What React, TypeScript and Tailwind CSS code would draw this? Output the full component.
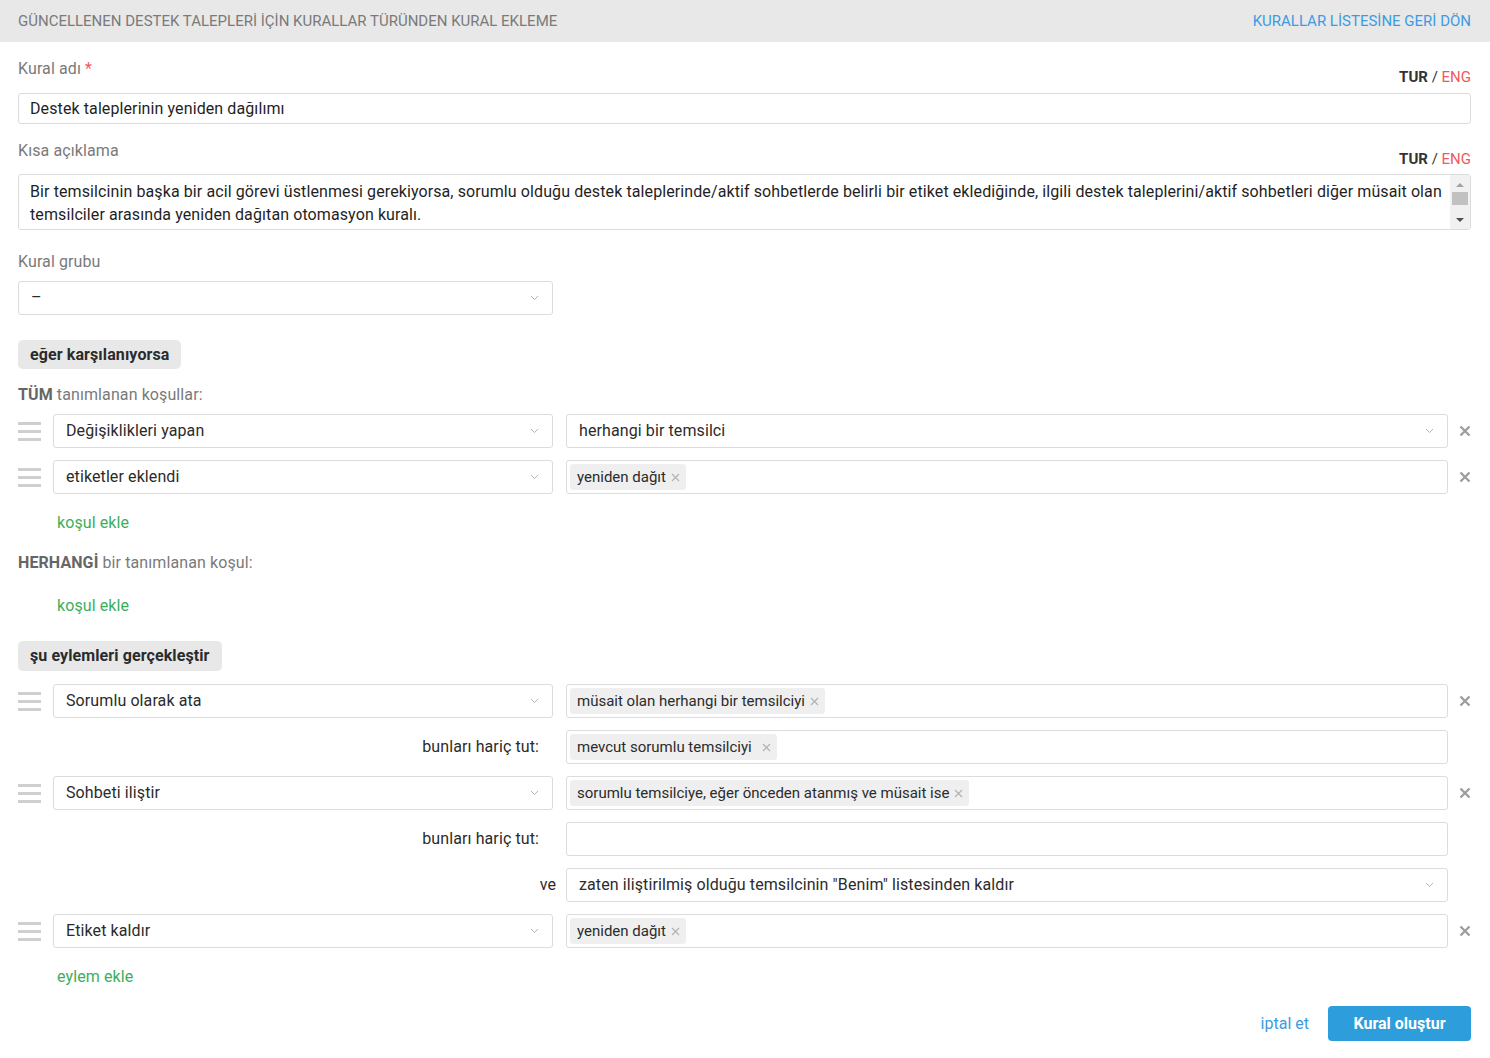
import React from 'react'

const Chevron = () => (
  <svg width="9" height="6" viewBox="0 0 9 6" className="shrink-0">
    <path d="M1 1l3.5 3.5L8 1" fill="none" stroke="#b5b5b5" strokeWidth="1" />
  </svg>
)

const Handle = () => (
  <div className="w-[35px] shrink-0 flex flex-col gap-[5px] pt-[1px]">
    <div className="w-[23px] h-[3px] bg-[#cfcfcf]" />
    <div className="w-[23px] h-[3px] bg-[#cfcfcf]" />
    <div className="w-[23px] h-[3px] bg-[#cfcfcf]" />
  </div>
)

const RemoveX = () => (
  <div className="w-[23px] shrink-0 flex justify-end">
    <svg width="12" height="12" viewBox="0 0 12 12">
      <path d="M1.5 1.5l9 9M10.5 1.5l-9 9" stroke="#9e9e9e" strokeWidth="2.4" />
    </svg>
  </div>
)

function Select({ value, className = '' }: { value: string; className?: string }) {
  return (
    <div className={`h-[34px] border border-[#dcdcdc] rounded-[3px] bg-white flex items-center pl-[12px] pr-[13px] ${className}`}>
      <span className="flex-1 text-[16px] tracking-[0.1px] text-[#2b2b2b] truncate">{value}</span>
      <Chevron />
    </div>
  )
}

function Chip({ label, gap = false }: { label: string; gap?: boolean }) {
  return (
    <span className="h-[26px] bg-[#efefef] rounded-[3px] flex items-center pl-[7px] pr-[6px] text-[15px] text-[#2b2b2b]">
      {label}
      <svg width="9" height="9" viewBox="0 0 9 9" className={gap ? 'ml-[10px]' : 'ml-[5px]'}>
        <path d="M1 1l7 7M8 1l-7 7" stroke="#b3b3b3" strokeWidth="1.2" />
      </svg>
    </span>
  )
}

function ChipBox({ chips }: { chips: { label: string; gap?: boolean }[] }) {
  return (
    <div className="flex-1 h-[34px] border border-[#dcdcdc] rounded-[3px] bg-white flex items-center pl-[3px] gap-1">
      {chips.map(c => <Chip key={c.label} label={c.label} gap={c.gap} />)}
    </div>
  )
}

function Row({ left, right, remove = true }: { left: React.ReactNode; right: React.ReactNode; remove?: boolean }) {
  return (
    <div className="flex items-center">
      {left}
      <div className="w-[13px] shrink-0" />
      {right}
      {remove ? <RemoveX /> : <div className="w-[23px] shrink-0" />}
    </div>
  )
}

const SubLabel = ({ text, pr = 'pr-[14px]' }: { text: string; pr?: string }) => (
  <div className={`w-[535px] shrink-0 text-right text-[16px] tracking-[0.1px] text-[#2b2b2b] ${pr}`}>{text}</div>
)

const LangSwitch = () => (
  <span className="text-[15px]">
    <b className="text-[#333] font-bold">TUR</b>
    <span className="text-[#333]"> / </span>
    <span className="text-[#f0595f]">ENG</span>
  </span>
)

const AddLink = ({ text }: { text: string }) => (
  <div className="pl-[39px] text-[16px] tracking-[0.1px] text-[#3cae5c]">{text}</div>
)

export default function App() {
  return (
    <div className="w-[1490px] min-h-[1058px] bg-white" style={{ fontFamily: 'Roboto, "Noto Sans", sans-serif' }}>
      {/* header */}
      <div className="h-[42px] bg-[#e8e8e8] flex items-center justify-between pr-[19px] pl-[18px]">
        <span className="text-[15px] text-[#7a7a7a]">GÜNCELLENEN DESTEK TALEPLERİ İÇİN KURALLAR TÜRÜNDEN KURAL EKLEME</span>
        <span className="text-[15px] text-[#3d9be0]">KURALLAR LİSTESİNE GERİ DÖN</span>
      </div>

      <div className="pl-[18px] pr-[19px]">
        {/* Kural adı */}
        <div className="pt-[16px] flex items-end justify-between">
          <span className="text-[16px] tracking-[0.1px] text-[#7a7a7a] leading-[22px] mb-[13px]">Kural adı <span className="text-[#f0595f]">*</span></span>
          <span className="mb-[4px]"><LangSwitch /></span>
        </div>
        <div className="h-[31px] border border-[#dcdcdc] rounded-[3px] flex items-center pl-[11px] text-[16px] tracking-[0.1px] text-[#1f1f1f]">
          Destek taleplerinin yeniden dağılımı
        </div>

        {/* Kısa açıklama */}
        <div className="pt-[16px] flex items-end justify-between">
          <span className="text-[16px] tracking-[0.1px] text-[#7a7a7a] leading-[22px] mb-[12px]">Kısa açıklama</span>
          <span className="mb-[3px]"><LangSwitch /></span>
        </div>
        <div className="h-[56px] border border-[#dcdcdc] rounded-[3px] flex">
          <div className="flex-1 pl-[11px] pr-[8px] pt-[5px] text-[16px] tracking-[0.1px] leading-[23px] text-[#1f1f1f]">
            Bir temsilcinin başka bir acil görevi üstlenmesi gerekiyorsa, sorumlu olduğu destek taleplerinde/aktif sohbetlerde belirli bir etiket eklediğinde, ilgili destek taleplerini/aktif sohbetleri diğer müsait olan temsilciler arasında yeniden dağıtan otomasyon kuralı.
          </div>
          <div className="w-[20px] bg-[#f1f1f1] flex flex-col items-center">
            <svg width="10" height="16" viewBox="0 0 10 16"><path d="M1 12l4-4 4 4z" fill="#a3a3a3" /></svg>
            <div className="w-[16px] h-[13px] bg-[#c1c1c1] mt-[1px]" />
            <div className="flex-1" />
            <svg width="10" height="14" viewBox="0 0 10 14"><path d="M1 3l4 4 4-4z" fill="#505050" /></svg>
          </div>
        </div>

        {/* Kural grubu */}
        <div className="pt-[21px] text-[16px] tracking-[0.1px] text-[#7a7a7a] leading-[22px]">Kural grubu</div>
        <div className="mt-[8px] w-[535px]">
          <Select value="–" />
        </div>

        {/* conditions */}
        <div className="mt-[25px] inline-flex h-[29px] items-center px-[12px] rounded-[5px] bg-[#e8e8e8] text-[16px] tracking-[0.1px] font-bold text-[#2b2b2b]">eğer karşılanıyorsa</div>
        <div className="mt-[15px] text-[16px] tracking-[0.1px] text-[#7a7a7a] leading-[22px]"><b className="font-bold text-[#666]">TÜM</b> tanımlanan koşullar:</div>

        <div className="mt-[8px] flex flex-col gap-[12px]">
          <Row left={<><Handle /><Select value="Değişiklikleri yapan" className="w-[500px] shrink-0" /></>} right={<Select value="herhangi bir temsilci" className="flex-1" />} />
          <Row left={<><Handle /><Select value="etiketler eklendi" className="w-[500px] shrink-0" /></>} right={<ChipBox chips={[{ label: 'yeniden dağıt' }]} />} />
        </div>

        <div className="mt-[17px]"><AddLink text="koşul ekle" /></div>
        <div className="mt-[17px] text-[16px] tracking-[0.1px] text-[#7a7a7a] leading-[22px]"><b className="font-bold text-[#666]">HERHANGİ</b> bir tanımlanan koşul:</div>
        <div className="mt-[20px]"><AddLink text="koşul ekle" /></div>

        {/* actions */}
        <div className="mt-[23px] inline-flex h-[30px] items-center px-[12px] rounded-[5px] bg-[#e8e8e8] text-[16px] tracking-[0.1px] font-bold text-[#2b2b2b]">şu eylemleri gerçekleştir</div>

        <div className="mt-[13px] flex flex-col gap-[12px]">
          <Row left={<><Handle /><Select value="Sorumlu olarak ata" className="w-[500px] shrink-0" /></>} right={<ChipBox chips={[{ label: 'müsait olan herhangi bir temsilciyi' }]} />} />
          <Row remove={false} left={<SubLabel text="bunları hariç tut:" />} right={<ChipBox chips={[{ label: 'mevcut sorumlu temsilciyi', gap: true }]} />} />
          <Row left={<><Handle /><Select value="Sohbeti iliştir" className="w-[500px] shrink-0" /></>} right={<ChipBox chips={[{ label: 'sorumlu temsilciye, eğer önceden atanmış ve müsait ise' }]} />} />
          <Row remove={false} left={<SubLabel text="bunları hariç tut:" />} right={<ChipBox chips={[]} />} />
          <Row remove={false} left={<SubLabel text="ve" pr="pr-0 translate-x-[3px]" />} right={<Select value={'zaten iliştirilmiş olduğu temsilcinin "Benim" listesinden kaldır'} className="flex-1" />} />
          <Row left={<><Handle /><Select value="Etiket kaldır" className="w-[500px] shrink-0" /></>} right={<ChipBox chips={[{ label: 'yeniden dağıt' }]} />} />
        </div>

        <div className="mt-[17px]"><AddLink text="eylem ekle" /></div>

        <div className="mt-[17px] flex items-center justify-end gap-[19px]">
          <span className="text-[16px] text-[#3d9be0]">iptal et</span>
          <button className="h-[35px] w-[143px] rounded-[4px] bg-[#2e9ddb] text-white font-bold text-[16px]">Kural oluştur</button>
        </div>
      </div>
    </div>
  )
}
